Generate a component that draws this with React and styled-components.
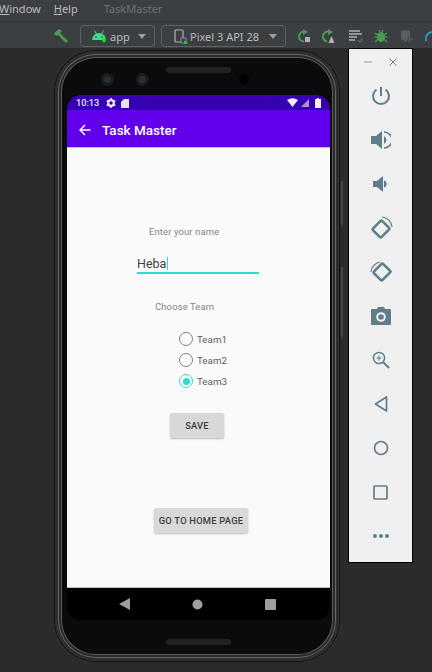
import React from 'react'
import styled, { createGlobalStyle } from 'styled-components'

const GlobalStyle = createGlobalStyle`
html, body {
  margin: 0;
  padding: 0;
  background: #2b2b2b;
}
body {
  font-family: "Roboto", "Liberation Sans", sans-serif;
}
* { box-sizing: border-box; }
`

const Page = styled.div`
width: 432px;
height: 672px;
overflow: hidden;
display: flex;
flex-direction: column;
background: #2b2b2b;
`

const MenuBar = styled.div`
height: 22px;
flex: none;
background: #3c3f41;
border-bottom: 1px solid #343638;
display: flex;
align-items: center;
padding: 0 0 5px 0;
font-family: "Noto Sans", "Liberation Sans", sans-serif;
font-size: 11px;
color: #bbbbbb;
`

const MenuItem = styled.span`
margin-left: ${p => p.$left}px;
color: ${p => p.$muted ? '#6f7173' : '#bbbbbb'};
u { text-underline-offset: 1px; }
`

const ToolBar = styled.div`
height: 26px;
flex: none;
background: #3c3f41;
display: flex;
align-items: center;
padding: 2px 0 0 53px;
`

const Selector = styled.div`
height: 22px;
width: ${p => p.$w}px;
margin-left: ${p => p.$left}px;
flex: none;
border: 1px solid #5e6060;
border-radius: 4px;
display: flex;
align-items: center;
padding-left: ${p => p.$pad}px;
gap: ${p => p.$gap}px;
font-family: "Noto Sans", "Liberation Sans", sans-serif;
font-size: 11px;
color: #bbbbbb;
white-space: nowrap;
`

const Caret = styled.span`
width: 0;
height: 0;
margin-left: ${p => p.$left}px;
border-left: 4.5px solid transparent;
border-right: 4.5px solid transparent;
border-top: 5px solid #9a9c9e;
`

const ToolIcon = styled.svg`
flex: none;
margin-left: ${p => p.$left}px;
`

const Main = styled.div`
flex: 1;
display: flex;
align-items: flex-start;
padding-left: 54px;
`

const Phone = styled.div`
width: 286px;
height: 612px;
flex: none;
margin-top: 2px;
padding: 44px 10px 0 12px;
border-radius: 42px;
background: #0b0b0b;
border: 1px solid #141414;
box-shadow: inset 0 0 0 3px #2e2e2e, inset 0 0 0 4px #666666, inset 0 0 0 6px #2a2a2a, inset 0 0 0 7px #5a5a5a, inset 0 0 0 8px #0b0b0b;
position: relative;
`

const SideKey = styled.span`
position: absolute;
left: 286px;
top: ${p => p.$top}px;
width: 2px;
height: ${p => p.$h}px;
background: #474747;
border-radius: 1px;
`

const Camera = styled.span`
position: absolute;
top: 22px;
left: ${p => p.$left}px;
width: 13px;
height: 13px;
border-radius: 50%;
background: #2a3033;
border: 3px solid #191d1f;
`

const Speaker = styled.span`
position: absolute;
left: 111px;
top: ${p => p.$top}px;
width: 65px;
height: 6px;
border-radius: 3px;
background: #212121;
`

const Sensor = styled.span`
position: absolute;
left: 184px;
top: 23px;
width: 10px;
height: 10px;
border-radius: 50%;
background: #000;
`

const Screen = styled.div`
width: 263px;
height: 525px;
border-radius: 14px;
overflow: hidden;
display: flex;
flex-direction: column;
background: #000;
`

const StatusBar = styled.div`
height: 15px;
flex: none;
background: #3700b3;
display: flex;
align-items: center;
padding: 0 9px 0 9px;
color: #e8e2f8;
font-size: 9.2px;
font-weight: 500;
`

const StatusIcons = styled.div`
margin-left: auto;
display: flex;
align-items: center;
gap: 3px;
`

const AppBar = styled.div`
height: 38px;
flex: none;
background: #6200ee;
border-bottom: 1px solid #c9b3f5;
display: flex;
align-items: center;
padding: 3px 0 0 12px;
gap: 11px;
color: #ffffff;
font-size: 13.5px;
font-weight: 500;
`

const Content = styled.div`
height: 440px;
flex: none;
background: #fafafa;
border-bottom: 1px solid #bdbdbd;
display: flex;
flex-direction: column;
align-items: flex-start;
padding-top: 78px;
`

const Hint = styled.div`
margin-left: ${p => p.$left}px;
margin-top: ${p => p.$top}px;
font-size: 9.5px;
line-height: 12px;
color: #858585;
letter-spacing: 0.1px;
`

const NameField = styled.div`
margin-left: 70px;
margin-top: 18px;
width: 122px;
height: 18px;
border-bottom: 2px solid #2fdccb;
display: flex;
align-items: center;
font-size: 12.5px;
color: #3e3e3e;
padding-bottom: 1px;
`

const TextCursor = styled.span`
width: 1px;
height: 13px;
background: #2fdccb;
margin-left: 1px;
`

const RadioGroup = styled.div`
margin-left: 112px;
margin-top: 19px;
display: flex;
flex-direction: column;
gap: 7px;
`

const RadioRow = styled.div`
display: flex;
align-items: center;
gap: 4px;
height: 14px;
font-size: 9.8px;
color: #5e5e5e;
`

const RadioDot = styled.span`
width: 14px;
height: 14px;
border-radius: 50%;
border: 1.5px solid ${p => p.$on ? '#2fdccb' : '#808080'};
display: flex;
align-items: center;
justify-content: center;
&::after {
  content: "";
  display: ${p => p.$on ? 'block' : 'none'};
  width: 7px;
  height: 7px;
  border-radius: 50%;
  background: #2fdccb;
}
`

const RaisedButton = styled.div`
margin-left: ${p => p.$left}px;
margin-top: ${p => p.$top}px;
width: ${p => p.$w}px;
height: 25px;
background: #d7d8d8;
border-radius: 2px;
box-shadow: 0 1px 2px rgba(0, 0, 0, 0.25);
display: flex;
align-items: center;
justify-content: center;
color: #3d3d3d;
font-size: 9.3px;
font-weight: 500;
letter-spacing: 0.25px;
white-space: nowrap;
`

const NavBar = styled.div`
flex: 1;
background: #000;
display: flex;
align-items: center;
padding-left: 52px;
`

const NavSlot = styled.div`
width: 73px;
flex: none;
display: flex;
justify-content: flex-start;
`

const Side = styled.div`
width: 65px;
height: 515px;
flex: none;
margin-left: 8px;
background: #f0f0f0;
border: 1px solid #000;
display: flex;
flex-direction: column;
align-items: center;
color: #607d8b;
`

const SideTop = styled.div`
height: 25px;
width: 100%;
flex: none;
display: flex;
align-items: center;
justify-content: center;
gap: 17px;
`

const SideSlot = styled.div`
height: 44px;
width: 100%;
flex: none;
display: flex;
align-items: center;
justify-content: center;
`

const ic = '#607d8b'

const App = () => {
  return (
    <Page>
      <GlobalStyle />
      <MenuBar>
        <MenuItem $left={-1}><u>W</u>indow</MenuItem>
        <MenuItem $left={13}><u>H</u>elp</MenuItem>
        <MenuItem $left={26} $muted>TaskMaster</MenuItem>
      </MenuBar>
      <ToolBar>
        <svg width="16" height="16" viewBox="0 0 16 16">
          <path d="M1 5 L6 1 L9 3 L7 5 L15 13 L13 15 L5 7 L3 8 Z" fill="#499c54" />
        </svg>
        <Selector $w={75} $left={11} $pad={10} $gap={3}>
          <svg width="16" height="14" viewBox="0 0 16 14">
            <path d="M1 11 A7 7 0 0 1 15 11 Z" fill="#3ddc84" />
            <path d="M3.5 1.5 L5.5 5 M12.5 1.5 L10.5 5" stroke="#3ddc84" strokeWidth="1" />
            <circle cx="5" cy="8" r="0.8" fill="#3c3f41" />
            <circle cx="11" cy="8" r="0.8" fill="#3c3f41" />
            <circle cx="13" cy="11.5" r="2" fill="#00e000" />
          </svg>
          app
          <Caret $left={5} />
        </Selector>
        <Selector $w={125} $left={6} $pad={12} $gap={3}>
          <svg width="13" height="15" viewBox="0 0 13 15">
            <rect x="1" y="1" width="8" height="12" rx="1" fill="none" stroke="#afb1b3" strokeWidth="1.2" />
            <rect x="7" y="9" width="5" height="5" fill="#3c3f41" stroke="#9876c8" />
            <rect x="10" y="12" width="3" height="3" fill="#00e000" />
          </svg>
          Pixel 3 API 28
          <Caret $left={7} />
        </Selector>
        <ToolIcon $left={11} width="14" height="14" viewBox="0 0 14 14">
          <path d="M7 2.5 A5 5 0 1 0 7 12.5" fill="none" stroke="#499c54" strokeWidth="2" />
          <path d="M6 0 L11 3 L6 6 Z" fill="#499c54" />
          <rect x="8" y="8" width="5" height="5" fill="#afb1b3" />
        </ToolIcon>
        <ToolIcon $left={11} width="14" height="14" viewBox="0 0 14 14">
          <path d="M7 2.5 A5 5 0 1 0 5 12.5" fill="none" stroke="#499c54" strokeWidth="2" />
          <path d="M6 0 L11 3 L6 6 Z" fill="#499c54" />
          <path d="M6.5 14 L9.5 7 L12.5 14 Z" fill="#afb1b3" />
        </ToolIcon>
        <ToolIcon $left={12} width="15" height="14" viewBox="0 0 15 14">
          <path d="M1 2 H12 M1 5 H14 M1 8 H9 M1 11 H7" stroke="#afb1b3" strokeWidth="1.5" />
          <path d="M10 11 A2 2 0 1 0 13 9" fill="none" stroke="#499c54" />
        </ToolIcon>
        <ToolIcon $left={11} width="14" height="14" viewBox="0 0 14 14">
          <ellipse cx="7" cy="8" rx="4" ry="5" fill="#499c54" />
          <path d="M1 4 L4 6 M13 4 L10 6 M0 8 H14 M1 13 L4 10 M13 13 L10 10 M5 1 L6 3 M9 1 L8 3" stroke="#499c54" strokeWidth="1.2" />
        </ToolIcon>
        <ToolIcon $left={12} width="15" height="14" viewBox="0 0 15 14">
          <path d="M1 2 L6 1 L10 2 V7 L6 13 L1 10 Z" fill="#5c5f61" />
          <path d="M8 6 L14 10 L8 14 Z" fill="#4c4f51" />
        </ToolIcon>
        <ToolIcon $left={10} width="7" height="14" viewBox="0 0 7 14">
          <path d="M1 12 A7 7 0 0 1 7 3" fill="none" stroke="#3592c4" strokeWidth="2" />
        </ToolIcon>
      </ToolBar>
      <Main>
        <Phone>
          <SideKey $top={130} $h={44} />
          <SideKey $top={216} $h={70} />
          <Camera $left={46} />
          <Camera $left={81} />
          <Speaker $top={16} />
          <Sensor />
          <Speaker $top={588} />
          <Screen>
            <StatusBar>
              10:13
              <svg style={{ marginLeft: 7 }} width="10" height="10" viewBox="0 0 10 10">
                <circle cx="5" cy="5" r="2.8" fill="none" stroke="#e8e2f8" strokeWidth="2.2" />
                <path d="M5 0 V2 M5 8 V10 M0.7 2.5 L2.4 3.5 M7.6 6.5 L9.3 7.5 M0.7 7.5 L2.4 6.5 M7.6 3.5 L9.3 2.5" stroke="#e8e2f8" strokeWidth="1.6" />
              </svg>
              <svg style={{ marginLeft: 5 }} width="8" height="10" viewBox="0 0 8 10">
                <path d="M3 1 H8 V10 H0 V4 Z" fill="#e8e2f8" />
              </svg>
              <StatusIcons>
                <svg width="11" height="9" viewBox="0 0 11 9">
                  <path d="M0 2 Q5.5 -1.5 11 2 L5.5 9 Z" fill="#f2eefc" />
                </svg>
                <svg width="8" height="8" viewBox="0 0 8 8">
                  <path d="M8 0 V8 H0 Z" fill="#a994dc" />
                </svg>
                <svg style={{ marginLeft: 3 }} width="6" height="10" viewBox="0 0 6 10">
                  <path d="M2 0 H4 V1 H6 V10 H0 V1 H2 Z" fill="#f2eefc" />
                </svg>
              </StatusIcons>
            </StatusBar>
            <AppBar>
              <svg width="12" height="12" viewBox="0 0 12 12">
                <path d="M11.5 6 H1.5 M6 1 L1 6 L6 11" fill="none" stroke="#fff" strokeWidth="1.5" />
              </svg>
              Task Master
            </AppBar>
            <Content>
              <Hint $left={82} $top={0}>Enter your name</Hint>
              <NameField>Heba<TextCursor /></NameField>
              <Hint $left={88} $top={27}>Choose Team</Hint>
              <RadioGroup>
                <RadioRow><RadioDot />Team1</RadioRow>
                <RadioRow><RadioDot />Team2</RadioRow>
                <RadioRow><RadioDot $on />Team3</RadioRow>
              </RadioGroup>
              <RaisedButton $left={103} $top={25} $w={54}>SAVE</RaisedButton>
              <RaisedButton $left={87} $top={70} $w={94}>GO TO HOME PAGE</RaisedButton>
            </Content>
            <NavBar>
              <NavSlot>
                <svg width="11" height="12" viewBox="0 0 11 12"><path d="M11 0 V12 L0 6 Z" fill="#9e9e9e" /></svg>
              </NavSlot>
              <NavSlot>
                <svg width="11" height="11" viewBox="0 0 11 11"><circle cx="5.5" cy="5.5" r="5" fill="#9e9e9e" /></svg>
              </NavSlot>
              <NavSlot>
                <svg width="11" height="11" viewBox="0 0 11 11"><rect width="11" height="11" rx="1" fill="#9e9e9e" /></svg>
              </NavSlot>
            </NavBar>
          </Screen>
        </Phone>
        <Side>
          <SideTop>
            <svg width="8" height="8" viewBox="0 0 8 8"><path d="M0 4 H8" stroke="#8aa0aa" strokeWidth="1" /></svg>
            <svg width="8" height="8" viewBox="0 0 8 8"><path d="M0.5 0.5 L7.5 7.5 M7.5 0.5 L0.5 7.5" stroke={ic} strokeWidth="1" /></svg>
          </SideTop>
          <SideSlot>
            <svg width="20" height="20" viewBox="0 0 20 20">
              <path d="M10 1 V10" stroke={ic} strokeWidth="2" />
              <path d="M5.5 3.5 A8 8 0 1 0 14.5 3.5" fill="none" stroke={ic} strokeWidth="2" />
            </svg>
          </SideSlot>
          <SideSlot>
            <svg width="20" height="18" viewBox="0 0 20 18">
              <path d="M0 5 H5 L11 0 V18 L5 13 H0 Z" fill={ic} />
              <path d="M13 5 A4.5 4.5 0 0 1 13 13 Z" fill={ic} />
              <path d="M13 1 A8 8 0 0 1 13 17" fill="none" stroke={ic} strokeWidth="1.6" />
            </svg>
          </SideSlot>
          <SideSlot>
            <svg width="15" height="16" viewBox="0 0 15 16">
              <path d="M0 5 H4 L10 0 V16 L4 11 H0 Z" fill={ic} />
              <path d="M11 4.5 A3.6 3.6 0 0 1 11 11.5 Z" fill={ic} />
            </svg>
          </SideSlot>
          <SideSlot>
            <svg width="24" height="24" viewBox="0 0 24 24">
              <rect x="6" y="6.5" width="12" height="13" rx="1" transform="rotate(45 12 13)" fill="none" stroke={ic} strokeWidth="2.6" />
              <path d="M13 1 A11 11 0 0 1 23 11" fill="none" stroke={ic} strokeWidth="1.2" />
            </svg>
          </SideSlot>
          <SideSlot>
            <svg width="24" height="24" viewBox="0 0 24 24">
              <rect x="7" y="5.5" width="12" height="13" rx="1" transform="rotate(45 13 12)" fill="none" stroke={ic} strokeWidth="2.6" />
              <path d="M2 12 A11 11 0 0 1 11 2" fill="none" stroke={ic} strokeWidth="1.2" />
            </svg>
          </SideSlot>
          <SideSlot>
            <svg width="20" height="18" viewBox="0 0 20 18">
              <path d="M6 2 L7 0 H13 L14 2 H19 A1 1 0 0 1 20 3 V17 A1 1 0 0 1 19 18 H1 A1 1 0 0 1 0 17 V3 A1 1 0 0 1 1 2 Z" fill={ic} />
              <circle cx="10" cy="10" r="3.8" fill="none" stroke="#f0f0f0" strokeWidth="2" />
            </svg>
          </SideSlot>
          <SideSlot>
            <svg width="18" height="18" viewBox="0 0 18 18">
              <circle cx="7" cy="7" r="5.6" fill="none" stroke={ic} strokeWidth="1.5" />
              <path d="M11 11 L17 17" stroke={ic} strokeWidth="2" />
              <path d="M7 4.5 V9.5 M4.5 7 H9.5" stroke={ic} strokeWidth="1" />
            </svg>
          </SideSlot>
          <SideSlot>
            <svg width="14" height="16" viewBox="0 0 14 16">
              <path d="M12.5 1 V15 L1.5 8 Z" fill="none" stroke={ic} strokeWidth="1.7" strokeLinejoin="round" />
            </svg>
          </SideSlot>
          <SideSlot>
            <svg width="16" height="16" viewBox="0 0 16 16">
              <circle cx="8" cy="8" r="6.5" fill="none" stroke={ic} strokeWidth="1.7" />
            </svg>
          </SideSlot>
          <SideSlot>
            <svg width="15" height="15" viewBox="0 0 15 15">
              <rect x="1" y="1" width="13" height="13" rx="1" fill="none" stroke={ic} strokeWidth="1.7" />
            </svg>
          </SideSlot>
          <SideSlot>
            <svg width="16" height="4" viewBox="0 0 16 4">
              <circle cx="2" cy="2" r="2" fill={ic} />
              <circle cx="8" cy="2" r="2" fill={ic} />
              <circle cx="14" cy="2" r="2" fill={ic} />
            </svg>
          </SideSlot>
        </Side>
      </Main>
    </Page>
  )
}

export default App
